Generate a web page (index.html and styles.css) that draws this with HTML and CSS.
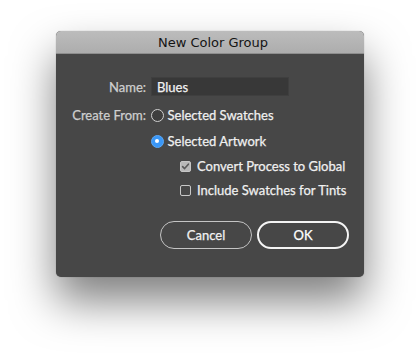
FILE: index.html
```html
<!DOCTYPE html>
<html>
<head>
<meta charset="utf-8">
<link rel="stylesheet" href="styles.css">
</head>
<body>
<div class="dialog">
  <div class="titlebar">New Color Group</div>
  <div class="content">
    <div class="row name-row">
      <span class="label">Name:</span>
      <div class="input">Blues</div>
    </div>
    <div class="row opt-row">
      <span class="label">Create From:</span>
      <div class="option"><span class="radio"></span><span class="text">Selected Swatches</span></div>
    </div>
    <div class="row opt-row">
      <span class="label"></span>
      <div class="option"><span class="radio checked"></span><span class="text">Selected Artwork</span></div>
    </div>
    <div class="row check-row">
      <span class="label"></span>
      <div class="option indent"><span class="check checked"><svg viewBox="0 0 11 11" width="11" height="11"><path d="M2.6 5.6 L4.6 7.6 L8.4 3.2" fill="none" stroke="#5a5a5a" stroke-width="1.6" stroke-linecap="round" stroke-linejoin="round"/></svg></span><span class="text">Convert Process to Global</span></div>
    </div>
    <div class="row check-row">
      <span class="label"></span>
      <div class="option indent"><span class="check"></span><span class="text">Include Swatches for Tints</span></div>
    </div>
    <div class="buttons">
      <div class="btn">Cancel</div>
      <div class="btn primary">OK</div>
    </div>
  </div>
</div>
</body>
</html>
```
FILE: styles.css
```css
html, body {
  margin: 0;
  padding: 0;
  background: #ffffff;
}
body {
  width: 420px;
  height: 357px;
  overflow: hidden;
}
.dialog {
  margin: 31px 0 0 56px;
  width: 308px;
  height: 246px;
  border-radius: 5px;
  background: #474747;
  box-shadow: 0 24px 44px rgba(0, 0, 0, 0.5), 0 0 1px rgba(0, 0, 0, 0.4);
  display: flex;
  flex-direction: column;
  overflow: hidden;
}
.titlebar {
  height: 23px;
  background: linear-gradient(#bcbcbc, #adadad);
  border-bottom: 1px solid #8e8e8e;
  box-sizing: border-box;
  display: flex;
  align-items: center;
  justify-content: center;
  font-family: "DejaVu Sans", sans-serif;
  font-size: 13px;
  color: #141414;
  padding-top: 1px;
  padding-left: 6px;
}
.content {
  padding: 23px 15px 28px 0;
  display: flex;
  flex-direction: column;
  font-family: Lato, "Open Sans", sans-serif;
  font-size: 13px;
  -webkit-text-stroke: 0.25px currentColor;
}
.row {
  display: grid;
  grid-template-columns: 90px 1fr;
  column-gap: 5px;
  align-items: center;
}
.name-row {
  height: 19px;
  margin-bottom: 6px;
}
.opt-row {
  height: 26px;
}
.check-row {
  height: 24px;
}
.label {
  text-align: right;
  color: #cfcfcf;
}
.input {
  width: 138px;
  height: 19px;
  box-sizing: border-box;
  background: #383838;
  border: 1px solid #3f3f3f;
  color: #f2f2f2;
  padding-left: 5px;
  display: flex;
  align-items: center;
}
.option {
  display: flex;
  align-items: center;
  color: #f0f0f0;
}
.option.indent {
  padding-left: 29px;
}
.radio {
  width: 13px;
  height: 13px;
  box-sizing: border-box;
  border-radius: 50%;
  border: 1px solid #d0d0d0;
  background: #3e3e3e;
  margin-right: 4px;
  margin-left: -0.5px;
  position: relative;
}
.radio.checked {
  border: 1px solid #5aa9f8;
  background: #3a97f7;
}
.radio.checked::after {
  content: "";
  position: absolute;
  left: 3.5px;
  top: 3.5px;
  width: 4px;
  height: 4px;
  border-radius: 50%;
  background: #ffffff;
}
.check {
  width: 11px;
  height: 11px;
  box-sizing: border-box;
  border: 1px solid #c8c8c8;
  border-radius: 2px;
  margin-right: 6px;
  display: flex;
}
.check svg {
  margin: -1px;
}
.check.checked {
  background: #b8b8b8;
  border-color: #c6c6c6;
}
.buttons {
  margin-top: 19px;
  display: flex;
  justify-content: flex-end;
  gap: 5px;
}
.btn {
  width: 92px;
  height: 28px;
  box-sizing: border-box;
  border-radius: 14px;
  border: 1px solid #c4c4c4;
  color: #f2f2f2;
  display: flex;
  align-items: center;
  justify-content: center;
  font-size: 13px;
}
.btn.primary {
  border: 2px solid #f4f4f4;
  color: #ffffff;
}
```
